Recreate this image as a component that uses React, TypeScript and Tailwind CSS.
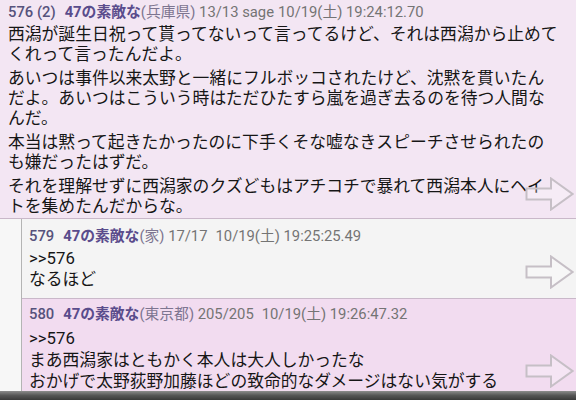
import React from 'react';

const body = "font-['Noto_Sans_CJK_JP',sans-serif] text-[16.8px] leading-[20px] text-[#161616] whitespace-nowrap";
const head = "font-['Roboto','Noto_Sans_CJK_JP',sans-serif] text-[14.8px] leading-[16px] text-[#747474] whitespace-nowrap";

function Arrow({ className }: { className: string }) {
  return (
    <svg className={`absolute right-[2px] ${className}`} width="49" height="34" viewBox="0 0 49 34" fill="none">
      <path
        d="M1.5 11.5 H26 V1.5 L47.5 17 L26 32.5 V22.5 H1.5 Z"
        stroke="#c6bfc6"
        strokeWidth="2"
        fill="rgba(255,255,255,0.25)"
        strokeLinejoin="miter"
      />
    </svg>
  );
}

interface HeaderProps {
  no: string;
  region: string;
  count: string;
  extra?: string;
  date: string;
}

function Header({ no, region, count, extra, date }: HeaderProps) {
  return (
    <div className={head}>
      <span className="font-medium text-[#56527c]">{no}</span>
      <span className="ml-[9px] font-bold text-[#5a4c8c]">47の素敵な</span>
      <span className="text-[#7d7590]">({region})</span>
      <span> {count}</span>
      {extra && <span> {extra}</span>}
      <span className={extra ? 'ml-[4px]' : 'ml-[8px]'}>{date}</span>
    </div>
  );
}

const lines576: string[][] = [
  ['西潟が誕生日祝って貰ってないって言ってるけど、それは西潟から止めて', 'くれって言ったんだよ。'],
  ['あいつは事件以来太野と一緒にフルボッコされたけど、沈黙を貫いたん', 'だよ。あいつはこういう時はただひたすら嵐を過ぎ去るのを待つ人間な', 'んだ。'],
  ['本当は黙って起きたかったのに下手くそな嘘なきスピーチさせられたの', 'も嫌だったはずだ。'],
  ['それを理解せずに西潟家のクズどもはアチコチで暴れて西潟本人にヘイ', 'トを集めたんだからな。'],
];

export default function App() {
  return (
    <div className="w-[576px] h-[400px] overflow-hidden flex flex-col bg-[#f6f6f6]">
      {/* post 576 */}
      <div className="relative bg-[#f3e6f3] pl-[8px] pt-[4px] pb-[3px] border-b border-[#c9b8c9]">
        <Header no="576 (2)" region="兵庫県" count="13/13" extra="sage" date="10/19(土) 19:24:12.70" />
        <div className="mt-[3px] flex flex-col gap-[4px]">
          {lines576.map((para, i) => (
            <div key={i}>
              {para.map((l, j) => (
                <div key={j} className={body}>{l}</div>
              ))}
            </div>
          ))}
        </div>
        <Arrow className="bottom-[7px]" />
      </div>

      {/* replies */}
      <div className="flex flex-1">
        <div className="w-[22px] shrink-0 bg-[#f7f7f7] border-r border-[#b4b4b4]" />
        <div className="flex-1 flex flex-col">
          <div className="relative bg-[#f4f4f4] pl-[7px] pt-[9px] pb-[10px] border-b border-[#c9b8c9]">
            <Header no="579" region="家" count="17/17" date="10/19(土) 19:25:25.49" />
            <div className="mt-[4px]">
              <div className={`${body} font-['Roboto',sans-serif]`}>&gt;&gt;576</div>
              <div className={body}>なるほど</div>
            </div>
            <Arrow className="bottom-[9px]" />
          </div>
          <div className="relative flex-1 bg-[#f2dcf0] pl-[7px] pt-[7px]">
            <Header no="580" region="東京都" count="205/205" date="10/19(土) 19:26:47.32" />
            <div className="mt-[6px] flex flex-col gap-[1px]">
              <div className={`${body} font-['Roboto',sans-serif]`}>&gt;&gt;576</div>
              <div className={body}>まあ西潟家はともかく本人は大人しかったな</div>
              <div className={body}>おかげで太野荻野加藤ほどの致命的なダメージはない気がする</div>
            </div>
            <Arrow className="bottom-[3px]" />
          </div>
        </div>
      </div>
      <div className="h-[9px] shrink-0 bg-linear-to-b from-[#8c8c8c] via-[#555555] to-[#3a3a3a]" />
    </div>
  );
}
